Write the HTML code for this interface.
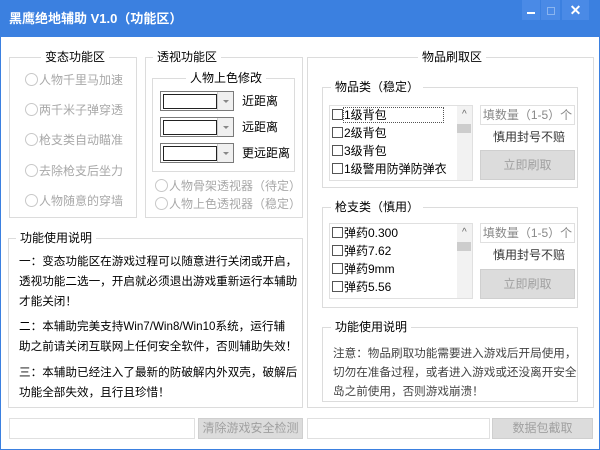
<!DOCTYPE html>
<html><head><meta charset="utf-8"><style>
*{margin:0;padding:0;box-sizing:border-box}
body{width:600px;height:450px;overflow:hidden;background:#fff;font-family:"Liberation Sans","Noto Sans CJK SC",sans-serif;font-size:12px;color:#000;position:relative}
.a{position:absolute}
.win{position:absolute;left:0;top:0;width:600px;height:450px;border:1px solid #3b80e0;border-top:none}
.title{position:absolute;left:0;top:0;width:600px;height:37px;background:#3b80e0;color:#fff;font-weight:bold;font-size:13px;line-height:37px;padding-left:9px}
.g{position:absolute;border:1px solid #dcdcdc}
.lb{position:absolute;background:#fff;padding:0 4px;line-height:14px;white-space:nowrap}
.rad{position:absolute;white-space:nowrap;color:#a8a8a8;line-height:16px}
.rad i{display:inline-block;width:13px;height:13px;border:1px solid #c8c8c8;border-radius:50%;vertical-align:-2px;margin-right:1px}
.combo{position:absolute;width:74px;height:20px;border:1px solid #7a7a7a;background:#fff}
.combo b{position:absolute;left:2px;top:2px;width:54px;height:15px;border:1px solid #222}
.combo s{position:absolute;right:0;top:0;width:16px;height:18px;background:#f0f0f0;border-left:1px solid #ccc}
.combo s:after{content:"";position:absolute;left:5px;top:8px;border:3px solid transparent;border-top:3px solid #888}
.list{position:absolute;border:1px solid #e0e0e0;background:#fff}
.list div{height:18px;line-height:18px;padding-left:2px;white-space:nowrap}
.cb{display:inline-block;width:11px;height:11px;border:1px solid #555;vertical-align:-1px;margin-right:1px}
.sb{position:absolute;right:0;top:0;width:15px;height:100%;background:#f2f2f2}
.inp{position:absolute;border:1px solid #e0e0e0;color:#888;line-height:18px;text-align:center;white-space:nowrap}
.btn{position:absolute;background:#dcdcdc;border:1px solid #cfcfcf;color:#a0a0a0;text-align:center}
.txt{position:absolute;line-height:20px;white-space:nowrap}
.sm{font-size:11.6px}
</style></head><body>
<div class="win"></div>
<div class="title">黑鹰绝地辅助 V1.0（功能区）</div>
<div class="a" style="left:522px;top:0;width:18px;height:20px;background:#4a8ae6"></div>
<div class="a" style="left:527px;top:12px;width:8px;height:2px;background:#fff"></div>
<div class="a" style="left:541px;top:0;width:19px;height:20px;background:#4a8ae6"></div>
<div class="a" style="left:547px;top:7px;width:8px;height:8px;border:1px solid #8ab4ef"></div>
<div class="a" style="left:562px;top:0;width:27px;height:20px;background:#4a8ae6;color:#fff;font-size:14px;font-weight:bold;text-align:center;line-height:20px">✕</div>

<div class="g" style="left:9px;top:57px;width:128px;height:161px"></div>
<div class="lb" style="left:41px;top:50px">变态功能区</div>
<div class="rad" style="left:25px;top:72px"><i></i>人物千里马加速</div>
<div class="rad" style="left:25px;top:102px"><i></i>两千米子弹穿透</div>
<div class="rad" style="left:25px;top:132px"><i></i>枪支类自动瞄准</div>
<div class="rad" style="left:25px;top:163px"><i></i>去除枪支后坐力</div>
<div class="rad" style="left:25px;top:193px"><i></i>人物随意的穿墙</div>

<div class="g" style="left:145px;top:57px;width:158px;height:161px"></div>
<div class="lb" style="left:153px;top:50px">透视功能区</div>
<div class="g" style="left:152px;top:78px;width:143px;height:94px"></div>
<div class="lb" style="left:186px;top:71px">人物上色修改</div>
<div class="combo" style="left:160px;top:91px"><b></b><s></s></div>
<div class="combo" style="left:160px;top:117px"><b></b><s></s></div>
<div class="combo" style="left:160px;top:143px"><b></b><s></s></div>
<div class="txt" style="left:242px;top:91px">近距离</div>
<div class="txt" style="left:242px;top:117px">远距离</div>
<div class="txt" style="left:242px;top:143px">更远距离</div>
<div class="rad" style="left:155px;top:178px"><i></i>人物骨架透视器（待定）</div>
<div class="rad" style="left:155px;top:196px"><i></i>人物上色透视器（稳定）</div>

<div class="g" style="left:8px;top:238px;width:295px;height:170px"></div>
<div class="lb" style="left:16px;top:231px">功能使用说明</div>
<div class="txt sm" style="left:19px;top:252px">一：变态功能区在游戏过程可以随意进行关闭或开启，<br>透视功能二选一，开启就必须退出游戏重新运行本辅助<br>才能关闭！</div>
<div class="txt sm" style="left:19px;top:317px">二：本辅助完美支持Win7/Win8/Win10系统，运行辅<br>助之前请关闭互联网上任何安全软件，否则辅助失效！</div>
<div class="txt sm" style="left:19px;top:363px">三：本辅助已经注入了最新的防破解内外双壳，破解后<br>功能全部失效，且行且珍惜！</div>

<div class="g" style="left:307px;top:57px;width:287px;height:351px"></div>
<div class="lb" style="left:418px;top:50px">物品刷取区</div>

<div class="g" style="left:322px;top:87px;width:256px;height:101px"></div>
<div class="lb" style="left:331px;top:80px">物品类（稳定）</div>
<div class="list" style="left:329px;top:105px;width:144px;height:76px">
<div><span class="cb"></span><span style="outline:1px dotted #555">1级背包&nbsp;&nbsp;&nbsp;&nbsp;&nbsp;&nbsp;&nbsp;&nbsp;&nbsp;&nbsp;&nbsp;&nbsp;&nbsp;&nbsp;&nbsp;&nbsp;&nbsp;</span></div><div><span class="cb"></span>2级背包</div><div><span class="cb"></span>3级背包</div><div><span class="cb"></span>1级警用防弹防弹衣</div>
<div class="sb" style="height:74px"><div style="position:absolute;left:0;top:18px;width:14px;height:9px;background:#cdcdcd"></div><div style="position:absolute;left:3px;top:0;font-size:10px;color:#666">^</div></div>
</div>
<div class="inp" style="left:480px;top:105px;width:95px;height:20px">填数量（1-5）个</div>
<div class="txt" style="left:493px;top:127px;color:#333">慎用封号不赔</div>
<div class="btn" style="left:480px;top:150px;width:95px;height:30px;line-height:28px">立即刷取</div>

<div class="g" style="left:322px;top:207px;width:256px;height:101px"></div>
<div class="lb" style="left:331px;top:200px">枪支类（慎用）</div>
<div class="list" style="left:329px;top:223px;width:144px;height:76px">
<div><span class="cb"></span>弹药0.300</div><div><span class="cb"></span>弹药7.62</div><div><span class="cb"></span>弹药9mm</div><div><span class="cb"></span>弹药5.56</div>
<div class="sb" style="height:74px"><div style="position:absolute;left:0;top:18px;width:14px;height:9px;background:#cdcdcd"></div><div style="position:absolute;left:3px;top:0;font-size:10px;color:#666">^</div></div>
</div>
<div class="inp" style="left:480px;top:223px;width:95px;height:20px">填数量（1-5）个</div>
<div class="txt" style="left:493px;top:245px;color:#333">慎用封号不赔</div>
<div class="btn" style="left:480px;top:269px;width:95px;height:30px;line-height:28px">立即刷取</div>

<div class="g" style="left:322px;top:327px;width:256px;height:75px"></div>
<div class="lb" style="left:331px;top:320px">功能使用说明</div>
<div class="txt sm" style="left:333px;top:344px;color:#444;line-height:19px">注意：物品刷取功能需要进入游戏后开局使用，<br>切勿在准备过程，或者进入游戏或还没离开安全<br>岛之前使用，否则游戏崩溃！</div>

<div class="a" style="left:9px;top:418px;width:186px;height:21px;border:1px solid #e0e0e0"></div>
<div class="btn" style="left:198px;top:418px;width:105px;height:21px;line-height:19px">清除游戏安全检测</div>
<div class="a" style="left:307px;top:418px;width:183px;height:21px;border:1px solid #e0e0e0"></div>
<div class="btn" style="left:492px;top:418px;width:101px;height:21px;line-height:19px">数据包截取</div>
</body></html>
